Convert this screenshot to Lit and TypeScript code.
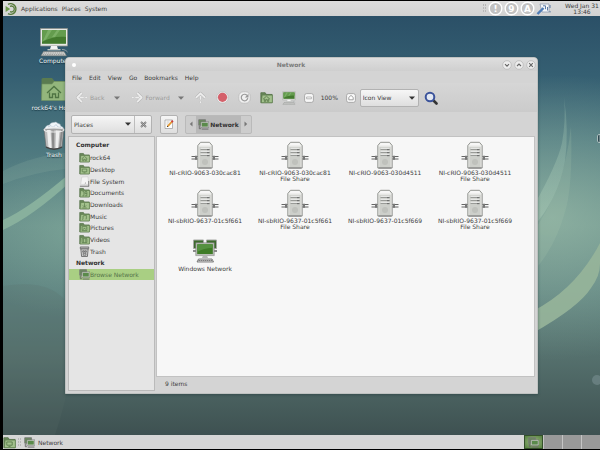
import { LitElement, html, svg, css, TemplateResult } from "lit";
import { customElement, state } from "lit/decorators.js";
import { classMap } from "lit/directives/class-map.js";

const draw = (w: number, h: number, vb: string, body: unknown): TemplateResult =>
  html`<svg class="ico" width=${w} height=${h} viewBox=${vb} aria-hidden="true">${body}</svg>`;

const glyphs: Record<string, unknown> = {
  home: svg`<path d="M2.8 7.6 6 4.8l3.2 2.8M4 7.2v2.4h1.2V8h1.6v1.6H8V7.2" />`,
  desk: svg`<path d="M3.5 5.5h5v3h-5zM5 9.6h2" />`,
  docs: svg`<path d="M3.8 5h1.6v4.6M3.6 9.6h1.8M6.6 5h2v2.2h-2zM8.6 7v2.6h-2" />`,
  down: svg`<path d="M6 4.6v4M4.2 7 6 8.8 7.8 7M3.6 9.8h4.8" />`,
  music: svg`<path d="M4.4 9V5.4l3.6-.8v4M3.6 9.2h.8M7.2 8.8H8" />`,
  pics: svg`<path d="M3.4 5h5.2v4.4H3.4zM4 8.8l1.6-2 1.4 1 1.2-1" />`,
  video: svg`<path d="M3.4 5h5.2v4.4H3.4zM4.8 5v4.4M7.4 5v4.4" />`,
};

const folder = (glyph: string, size = 11) =>
  draw(size, size, "0 0 12 12", svg`
    <path d="M.8 10.8V1.6h4l1 1.6h5.4v7.6z" fill="#69875a" stroke="#4d6b40" stroke-width=".7" />
    <path d="M1.2 10.8 2 3.8h9.4v7z" fill="#a3c18d" stroke="#587848" stroke-width=".6" />
    <g fill="none" stroke="#5b7b4c" stroke-width=".8">${glyphs[glyph]}</g>`);

const drive = () =>
  draw(11, 11, "0 0 12 12", svg`
    <path d="M3 1.2 9.8.8 10.8 11H1.6z" fill="#f4f4f4" stroke="#c3c3c3" stroke-width=".5" />
    <path d="M1.4 8.6h9.2V11H1.4z" fill="#dcdcdc" />
    <path d="M1 11.2h10M10.6 5.4v5.6M7.4 7.4l-1 1" stroke="#6d6d6d" stroke-width=".9" fill="none" />`);

const bin = () =>
  draw(11, 11, "0 0 12 12", svg`
    <path d="M2 3h8l-.8 8.4H2.8z" fill="#d5d5d5" stroke="#4d4d4d" stroke-width=".8" />
    <path d="M1.4 1h9.2v2H1.4z" fill="#b5b5b5" stroke="#555" stroke-width=".7" />
    <path d="M4 5.2h1.6v1.6H4zM6.4 5.2H8v1.6H6.4zM4.6 8h3v2h-3z" fill="none" stroke="#505050" stroke-width=".7" />`);

const screens = (size = 11) =>
  draw(size, size, "0 0 12 12", svg`
    <path d="M.8.8h7.4v6H.8z" fill="#6b8a5d" stroke="#777" stroke-width=".9" />
    <path d="M3.6 3.6h7.6v5.2H3.6z" fill="#5a8a4b" stroke="#d9d9d9" stroke-width=".9" />
    <path d="M3 3h8.8v6.4H3z" fill="none" stroke="#666" stroke-width=".5" />
    <path d="M1.4 7.4v3.2h1.8M4 11h7.4" fill="none" stroke="#666" stroke-width="1" />`);

const monitor = (size: number) =>
  draw(size, size, "0 0 30 30", svg`
    <path d="M1.5 1.5h27v17.5h-27z" fill="#e6e8e4" stroke="#8d918b" stroke-width=".8" />
    <path d="M3 3h24v13.8H3z" fill="#437a2e" />
    <path d="M3 3h24v7C18 9 10 11 3 15z" fill="#649c4e" />
    <path d="M9 3h4L7 12.5l-3 1.3zM18 3h3l-5 7h-3z" fill="#8bbd76" opacity=".6" />
    <path d="M12 19h6l1 3.2h-8z" fill="#f4f4f4" />
    <path d="M8.5 22h13v1.4h-13z" fill="#c4c7c3" />
    <path d="M4.5 24.6H25l2.5 4.2H2z" fill="#e0e2df" stroke="#6d706c" stroke-width=".6" />
    <path d="M4.5 26H25M3.6 27.4h22.6" stroke="#777" stroke-width=".7" stroke-dasharray="1.6 .6" />
    <path d="M23 22.5c3 0 4 1 5.5 2.5" stroke="#9aa3a5" stroke-width="1" fill="none" />`);

const bigFolder = () =>
  draw(30, 30, "0 0 30 30", svg`
    <path d="M2.5 25V5.5Q2.5 4 4 4h9l2.5 3h12v18z" fill="#5a7b50" />
    <path d="M2.5 26.5 3 10h10l2-2.5h13v19z" fill="#93b67c" stroke="#6f9160" stroke-width=".6" />
    <path d="m8 19 7-6.5 7 6.5M10.5 18.5v5h3V20h3v3.5h3v-5" fill="none" stroke="#4f7443" stroke-width="1.3" />`);

const bigTrash = () =>
  draw(30, 30, "0 0 30 30", svg`
    <path d="M5.5 8q1.5-4 5-4 1-3 4.5-2.5 2-1.5 4 1 3 .5 2.500 2.500 3 1 3.500 3z" fill="#f1f6fa" stroke="#a9b6c0" stroke-width=".5" />
    <path d="m9 6 3-1.500 2 2 3-3 2 2.500 3 .5" fill="none" stroke="#b9c7d3" stroke-width=".8" />
    <path d="m5 8 2 18q8 4 16 0l2-18z" fill="#bdbdbd" stroke="#666" stroke-width=".6" />
    <path d="m8 9 1.500 17.500 3 .8L11.500 9zM17 9.500l-.5 18 2.500-.5 1.500-17z" fill="#eee" />
    <path d="m12.500 9.500.8 18h2V9.500zM22 9l-2 17.500 2-.8L24 9z" fill="#8a8a8a" />
    <ellipse cx="15" cy="8.8" rx="10" ry="2.2" fill="none" stroke="#ececec" stroke-width="1.2" />
    <path d="M7 26.200q8 4 16 0" fill="none" stroke="#454545" stroke-width="1.4" />`);

const server = () =>
  draw(28, 28, "0 0 28 28", svg`
    <path d="M.5 15.500h27M.5 18h27" stroke="#666" stroke-width="1.1" />
    <path d="M4 14.800h2v4H4zM22 14.800h2v4h-2z" fill="#777" />
    <path d="M6.800 4.500 9.500 1.300h9l2.700 3.200V27H6.800z" fill="#e6e7e4" stroke="#8b8d89" stroke-width=".9" />
    <path d="m8 4.500 2-2.500h8l2 2.500z" fill="#f7f7f6" />
    <path d="M8.400 6h11.200v20H8.400z" fill="#cdcfca" />
    <path d="M9.500 8.300h9M9.500 11.300h9M9.500 14.300h9" stroke="#999b97" stroke-width="1.3" />
    <path d="M9.500 7.300h9M9.500 10.300h9M9.500 13.300h9" stroke="#f6f6f6" stroke-width=".9" />
    <path d="M16 8.700h2.500M16 11.700h2.500M16 14.700h2.500" stroke="#555" stroke-width=".7" />
    <circle cx="14" cy="21" r="3" fill="#bfc1bc" />
    <path d="M7.500 27h13" stroke="#666" stroke-width=".8" />`);

const lan = () =>
  draw(28, 28, "0 0 28 28", svg`
    <path d="M2.500 3h10v8.500h-10zM15.500 3h10v8.500h-10z" fill="#3d6b2d" stroke="#a6a8a4" stroke-width="1" />
    <path d="M2 13h5v2H2zM21 13h5v2h-5z" fill="#8b8b8b" />
    <path d="M5.500 6.500h17v11.300h-17z" fill="#3f7c27" stroke="#b9bcb6" stroke-width="1.4" />
    <path d="M4.700 5.700h18.600v12.900H4.700z" fill="none" stroke="#7b7d79" stroke-width=".5" />
    <path d="M6.500 7.300h15v3.400q-9 .5-15 4z" fill="#559140" />
    <path d="M12 18.600h4l1 2.400h-6z" fill="#b5b5b5" />
    <path d="M7.500 22H21l1.500 3H6z" fill="#dcdcdc" stroke="#555" stroke-width=".7" />
    <path d="M7.500 23.500H21" stroke="#555" stroke-width=".8" stroke-dasharray="1.4 .6" />`);

const arrow = (dir: "left" | "right" | "up") =>
  draw(13, 13, "0 0 14 14", svg`<g class=${dir} fill="none" stroke-linejoin="round">
      <path d="M7.500 2 2.500 7l5 5M5 7h4.500M11 7h2" stroke="#b2b2b2" stroke-width="3" />
      <path d="M7.500 2 2.500 7l5 5M5 7h4.500M11 7h2" stroke="#ededed" stroke-width="2" />
    </g>`);

const tri = () =>
  html`<svg class="ico" width="6" height="4" viewBox="0 0 6 4" aria-hidden="true"><path d="M0 .5h6L3 3.7z" fill="currentColor" /></svg>`;

const toolIcons: Record<string, () => TemplateResult> = {
  stop: () => draw(13, 13, "0 0 13 13", svg`
    <path d="M4 1h5l3 3v5l-3 3H4L1 9V4z" fill="#ececec" stroke="#bcbcbc" stroke-width=".6" />
    <circle cx="6.5" cy="6.3" r="4.6" fill="#d4606a" />`),
  reload: () => draw(13, 13, "0 0 13 13", svg`
    <rect x=".8" y=".8" width="11.4" height="11.4" rx="4.5" fill="#f0f0f0" stroke="#b5b5b5" stroke-width=".7" />
    <path d="M9 4.300A3.300 3.300 0 1 0 9.800 7.200" fill="none" stroke="#989898" stroke-width="1.2" />
    <path d="M10.500 2.800v3.700H6.800z" fill="#989898" />`),
  home: () => folder("home", 13),
  computer: () => monitor(14),
};

const zoomIcon = (kind: "out" | "reset") =>
  draw(10, 10, "0 0 10 10", svg`
    <rect x=".6" y=".6" width="8.8" height="8.8" rx="2" fill="#f8f8f8" stroke="#9a9a9a" stroke-width=".8" />
    ${kind === "out"
      ? svg`<path d="M2.600 4h4.800v1.800H2.600z" fill="#fff" stroke="#8f8f8f" stroke-width=".6" />`
      : svg`<path d="M5 2.400 7.200 4.400v2.400H2.800V4.400z" fill="#fff" stroke="#8a8a8a" stroke-width=".8" />`}`);

interface Place { label: string; icon: () => TemplateResult }

@customElement("app-root")
export class AppRoot extends LitElement {
  @state() private selected = "Browse Network";

  private places: Place[] = [
    { label: "rock64", icon: () => folder("home") },
    { label: "Desktop", icon: () => folder("desk") },
    { label: "File System", icon: drive },
    { label: "Documents", icon: () => folder("docs") },
    { label: "Downloads", icon: () => folder("down") },
    { label: "Music", icon: () => folder("music") },
    { label: "Pictures", icon: () => folder("pics") },
    { label: "Videos", icon: () => folder("video") },
    { label: "Trash", icon: bin },
  ];

  private network: Place[] = [{ label: "Browse Network", icon: () => screens() }];

  private hosts = [
    ["NI-cRIO-9063-030cac81"],
    ["NI-cRIO-9063-030cac81", "File Share"],
    ["NI-cRIO-9063-030d4511"],
    ["NI-cRIO-9063-030d4511", "File Share"],
    ["NI-sbRIO-9637-01c5f661"],
    ["NI-sbRIO-9637-01c5f661", "File Share"],
    ["NI-sbRIO-9637-01c5f669"],
    ["NI-sbRIO-9637-01c5f669", "File Share"],
  ];

  static styles = css`
    :host {
      display: flex;
      flex-direction: column;
      box-sizing: border-box;
      min-height: 100vh;
      padding: 1px 0 1px 3px;
      background: #000;
      color: #3c3c3c;
      font: 6px/7px "DejaVu Sans", "Noto Sans", sans-serif;
      overflow: hidden;
    }
    * { box-sizing: border-box; }
    button, select {
      margin: 0;
      padding: 0;
      border: 0;
      background: none;
      font: inherit;
      color: inherit;
      white-space: nowrap;
    }
    ul { margin: 0; padding: 0; list-style: none; }
    a { color: inherit; text-decoration: none; }
    .ico { display: block; flex: none; }
    .right { transform: rotate(180deg); transform-origin: 7px 7px; }
    .up { transform: rotate(90deg); transform-origin: 7px 7px; }

    .panel {
      display: flex;
      align-items: center;
      flex: none;
      height: 15px;
      background: linear-gradient(#dcdcdc, #d2d2d2);
    }
    .panel nav { display: flex; gap: 4px; margin-left: 4px; flex: 1; }
    .panel .ico { margin-left: 2px; }
    .tray { display: flex; align-items: center; gap: 1px; }
    .tray .ico { margin: 0; }
    .clock { width: 36px; margin-left: 13px; text-align: center; line-height: 6px; white-space: nowrap; }
    .panel.tasks { height: 14px; background: #d6d6d6; }
    .tasks .ico { margin: 0; }
    .task { display: flex; align-items: center; gap: 3px; margin-left: 2px; }
    .spaces { display: flex; gap: 1px; margin-left: auto; height: 100%; background: #c4c4c4; }
    .space { width: 18px; background: #999; }
    .space.on {
      display: grid;
      place-items: center;
      width: 19px;
      border: 1px solid #34502a;
      background: radial-gradient(#9dbd83, #56803f);
    }

    .desktop { position: relative; flex: 1; display: flex; overflow: hidden; }
    .wall { position: absolute; inset: 0; width: 100%; height: 100%; }
    .shortcuts {
      position: relative;
      display: flex;
      flex-direction: column;
      gap: 9px;
      width: 60px;
      padding: 11px 0 0;
      margin-left: 21px;
    }
    .shortcut {
      display: flex;
      flex-direction: column;
      align-items: center;
      width: 100%;
      color: #f2f5f5;
      line-height: 8px;
      text-shadow: 0 1px 1px #12303c;
    }
    .pointer { position: absolute; right: 0; top: 118px; }

    .window {
      position: absolute;
      inset: 41px 62px 41px 62px;
      display: flex;
      flex-direction: column;
      border: 1px solid #bfc2c1;
      border-radius: 4px 4px 0 0;
      background: #d4d4d4;
      box-shadow: 0 1px 3px #20383c80;
    }
    .title {
      display: flex;
      align-items: center;
      height: 13px;
      padding: 0 1px 0 6px;
      border-radius: 3px 3px 0 0;
      background: linear-gradient(#dedede, #cfcfcf);
      color: #7b7b7b;
    }
    .title h1 { flex: 1; margin: 0; padding-left: 4px; text-align: center; font: bold 6px/7px "DejaVu Sans", sans-serif; }
    .dot { width: 4px; height: 4px; border-radius: 2px; background: #fff; }
    .controls { display: flex; gap: 2px; }
    .menu { display: flex; gap: 7px; align-items: center; height: 12px; padding-left: 6px; }
    .tools {
      display: flex;
      align-items: center;
      height: 29px;
      padding-left: 9px;
      background: linear-gradient(#d6d6d6, #cbcbcb);
    }
    .tools button { display: flex; align-items: center; }
    .tools .dim { color: #9c9c9c; gap: 2px; }
    .tools .grey { color: #777; }
    .back { margin: 0 11px 0 9px; }
    .next { margin: 0 10px 0 8px; }
    .icons { display: flex; align-items: center; gap: 9px; }
    .zoom { display: flex; align-items: center; gap: 7px; margin-left: 8px; }
    .zoom output { width: 18px; }
    .pick { display: grid; align-items: center; }
    .pick > * { grid-area: 1 / 1; }
    .pick select { appearance: none; height: 100%; width: 100%; padding: 0 2px; }
    .pick .ico { justify-self: end; margin-right: 3px; pointer-events: none; color: #333; }
    .raised {
      border: 1px solid #b2b2b2;
      border-radius: 2px;
      background: linear-gradient(#f6f6f6, #dedede);
    }
    .view { width: 59px; height: 18px; margin: 0 5px 0 4px; }
    .where { display: flex; align-items: center; height: 24px; padding-left: 5px; background: #d4d4d4; }
    .places { display: flex; width: 81px; height: 19px; }
    .places .pick { flex: 1; border-right: 1px solid #bdbdbd; }
    .places button { width: 16px; display: grid; place-items: center; }
    .edit { display: grid; place-items: center; width: 18px; height: 19px; margin: 0 7px 0 8px; }
    .path {
      display: flex;
      height: 19px;
      border: 1px solid #bababa;
      border-radius: 2px;
      background: #cdcdcd;
    }
    .path button { display: flex; align-items: center; justify-content: center; width: 10px; gap: 1px; }
    .path .here { width: 45px; background: #b8b8b8; font-weight: bold; color: #333; }

    .body { display: flex; flex: 1; padding: 0 2px 2px; gap: 1px; }
    .side {
      width: 87px;
      flex: none;
      border: 1px solid #bababa;
      background: #e5e5e5;
      padding-top: 2px;
    }
    .side h2 { margin: 0; padding-left: 7px; font: bold 6px/12px "DejaVu Sans", sans-serif; color: #333; }
    .side ul { display: grid; grid-auto-rows: 1fr; }
    .side .local { height: 105px; margin-top: 1px; }
    .side a { display: flex; align-items: center; height: 100%; padding-left: 10px; }
    .side .net a { height: 11px; }
    .side a.on { background: #a9cf83; color: #56734a; }
    .pane { flex: 1; display: flex; flex-direction: column; }
    .files {
      display: grid;
      grid-template-columns: repeat(auto-fill, 90px);
      grid-auto-rows: 48px;
      flex: 1;
      align-content: start;
      padding: 4px 0 0 3px;
      border: 1px solid #c2c2c2;
      background: #f7f7f7;
    }
    .files button {
      display: flex;
      flex-direction: column;
      align-items: center;
      width: 100%;
      line-height: 6px;
    }
    .files .ico { margin-bottom: 1px; }
    .status { height: 14px; line-height: 14px; padding-left: 9px; }
  `;

  private wallpaper() {
    return html`<svg class="wall" viewBox="0 0 597 419" preserveAspectRatio="none" aria-hidden="true">
      <defs>
        <linearGradient id="sky" x1="0" y1="0" x2="0" y2="1">
          <stop offset="0" stop-color="#2b5067" />
          <stop offset=".14" stop-color="#355f72" />
          <stop offset=".3" stop-color="#4b767e" />
          <stop offset=".5" stop-color="#668d89" />
          <stop offset=".65" stop-color="#5d8280" />
          <stop offset=".82" stop-color="#546f6c" />
          <stop offset="1" stop-color="#3e5151" />
        </linearGradient>
        <radialGradient id="glow" cx=".92" cy=".48" r=".34">
          <stop offset="0" stop-color="#a3c4ae" stop-opacity=".6" />
          <stop offset="1" stop-color="#a3c4ae" stop-opacity="0" />
        </radialGradient>
        <radialGradient id="haze" cx=".12" cy=".52" r=".2">
          <stop offset="0" stop-color="#8fb8a4" stop-opacity=".45" />
          <stop offset="1" stop-color="#8fb8a4" stop-opacity="0" />
        </radialGradient>
        <linearGradient id="tail" x1="0" y1="0" x2="0" y2="1">
          <stop offset="0" stop-color="#9cc0b0" stop-opacity=".25" />
          <stop offset="1" stop-color="#a9cab5" stop-opacity=".5" />
        </linearGradient>
      </defs>
      <rect width="597" height="419" fill="url(#sky)" />
      <rect width="597" height="419" fill="url(#glow)" />
      <rect width="597" height="419" fill="url(#haze)" />
      <path d="M0 155Q30 139 70 136v16Q30 156 0 168z" fill="#8fb3a3" opacity=".2" />
      <path d="M0 204Q25 193 66 158v9Q30 200 0 214z" fill="#8db5a0" opacity=".85" />
      <path d="M0 270Q50 262 66 290q10 60-14 129H0z" fill="#5c706b" opacity=".2" />
      <path d="M561 81q5 34 1 64-8 40-32 66v-20q24-42 29-64 4-22 2-46z" fill="url(#tail)" />
      <path d="M568 110q2 60-6 86-10 36-32 60v-40q32-44 38-106z" fill="#a8c6ae" opacity=".2" />
      <path d="M597 227q-24 46-67 68v22q46-26 58-45 9-12 9-24z" fill="#97b59a" opacity=".9" />
      <circle cx="594" cy="364" r="5" fill="#72898a" opacity=".7" />
    </svg>`;
  }

  private placeRow(p: Place) {
    return html`<li>
      <a href="#" class=${classMap({ on: p.label === this.selected })}
        @click=${(e: Event) => { e.preventDefault(); this.selected = p.label; }}>${p.icon()}${p.label}</a>
    </li>`;
  }

  private control(name: string, d: string) {
    return html`<button aria-label=${name}>${draw(10, 10, "0 0 10 10", svg`
      <circle cx="5" cy="5" r="4.3" fill="#ededed" stroke="#b5b5b5" stroke-width=".7" />
      <path d=${d} fill="none" stroke="#666" stroke-width="1.1" />`)}</button>`;
  }

  private badge(mark: string) {
    return html`<svg class="ico" width="15" height="15" viewBox="0 0 15 15" aria-hidden="true">
      <circle cx="7.5" cy="7.5" r="6.3" fill="#c2c2c2" stroke="#fff" stroke-width="1.4" />
      <text x="7.5" y="10.7" text-anchor="middle" font-size="9" font-weight="bold" fill="#fff">${mark}</text>
    </svg>`;
  }

  private grip() {
    return html`<svg class="ico" width="6" height="11" viewBox="0 0 6 11" aria-hidden="true">
      <path d="M2.500 1v9M4.500 1v9" stroke="#b8b8b8" stroke-width="1" stroke-dasharray="2 1" />
    </svg>`;
  }

  render() {
    return html`
      <header class="panel">
        ${draw(12, 12, "0 0 12 12", svg`
          <g fill="none" stroke="#587b3c" stroke-width="1.3">
            <path d="M3 1.400A5.300 5.300 0 1 1 3 10.600" />
            <path d="M5 3.300a3 3 0 1 1 0 5.400" />
          </g>
          <path d="m.6 3 4.600 3-4.600 3z" fill="#6f9b4c" />`)}
        <nav><button>Applications</button><button>Places</button><button>System</button></nav>
        <div class="tray">
          ${this.grip()}${this.badge("!")}${this.badge("9")}${this.badge("A")}
          ${draw(15, 12, "0 0 15 12", svg`
            <path d="M4 1h9v8H6z" fill="#f5f7fa" stroke="#8d9bae" stroke-width=".8" />
            <path d="M1.500 11 7.500 5" stroke="#4f7cb6" stroke-width="2.4" />
            <path d="M7 2.800h2.500v3.400M11.500 4v3.500M14 2v3M14 8v1.500" stroke="#5c7ba3" stroke-width="1" fill="none" />`)}
        </div>
        <time class="clock">Wed Jan 31<br />13:46</time>
      </header>

      <main class="desktop">
        ${this.wallpaper()}
        <div class="shortcuts">
          <button class="shortcut">${monitor(30)}Computer</button>
          <button class="shortcut">${bigFolder()}rock64's Home</button>
          <button class="shortcut">${bigTrash()}Trash</button>
        </div>
        <svg class="pointer" width="3" height="9" viewBox="0 0 3 9" aria-hidden="true">
          <path d="M3 .5H1.500L.5 2v5l1 1.500H3z" fill="#2e4a52" stroke="#c7d3d2" stroke-width=".8" />
        </svg>

        <section class="window" aria-label="Network">
          <div class="title">
            <span class="dot"></span>
            <h1>Network</h1>
            <div class="controls">
              ${this.control("Minimize", "M3 4.200 5 6.200 7 4.200")}
              ${this.control("Maximize", "M3 6 5 4 7 6")}
              ${this.control("Close", "m3.200 3.200 3.600 3.600m0-3.600L3.200 6.800")}
            </div>
          </div>
          <nav class="menu">
            ${["File", "Edit", "View", "Go", "Bookmarks", "Help"].map((m) => html`<button>${m}</button>`)}
          </nav>
          <div class="tools">
            <button class="dim">${arrow("left")}Back</button>
            <button class="grey back" aria-label="Back history">${tri()}</button>
            <button class="dim">${arrow("right")}Forward</button>
            <button class="grey next" aria-label="Forward history">${tri()}</button>
            <div class="icons">
              <button aria-label="Up">${arrow("up")}</button>
              <button aria-label="Stop">${toolIcons.stop()}</button>
              <button aria-label="Reload">${toolIcons.reload()}</button>
              <button aria-label="Home">${toolIcons.home()}</button>
              <button aria-label="Computer">${toolIcons.computer()}</button>
            </div>
            <div class="zoom">
              <button aria-label="Zoom out">${zoomIcon("out")}</button>
              <output>100%</output>
              <button aria-label="Normal size">${zoomIcon("reset")}</button>
            </div>
            <div class="pick raised view">
              <select aria-label="View mode"><option>Icon View</option></select>${tri()}
            </div>
            <button aria-label="Search">${draw(14, 14, "0 0 14 14", svg`
              <path d="m9 9 3.500 3.500" stroke="#333" stroke-width="2.6" stroke-linecap="round" />
              <circle cx="6" cy="6" r="4.3" fill="#e2e8f2" stroke="#3b539b" stroke-width="2" />`)}</button>
          </div>
          <div class="where">
            <div class="places raised">
              <div class="pick"><select aria-label="Side pane"><option>Places</option></select>${tri()}</div>
              <button aria-label="Close side pane">${draw(7, 7, "0 0 7 7", svg`
                <path d="m1 1 5 5m0-5L1 6" stroke="#777" stroke-width="1.8" /><path d="m1 1 5 5m0-5L1 6" stroke="#ccc" stroke-width=".5" />`)}</button>
            </div>
            <button class="edit raised" aria-label="Edit location">${draw(10, 10, "0 0 10 10", svg`
              <path d="M1 1h7.500v8.500H1z" fill="#fdfdfd" stroke="#999" stroke-width=".7" />
              <path d="M2.500 3h3M2.500 5h2" stroke="#aaa" stroke-width=".6" />
              <path d="M3.600 7.400 8 2.600" stroke="#e39a35" stroke-width="1.8" />
              <path d="m7.600 3 1.200-1.300" stroke="#cc3b3b" stroke-width="2" />
              <path d="m3 8 .9-.9" stroke="#333" stroke-width="1" />`)}</button>
            <div class="path">
              <button aria-label="Scroll left">${draw(4, 6, "0 0 4 6", svg`<path d="M3.500.5v5L.8 3z" fill="#777" />`)}</button>
              <button class="here">${screens(11)}Network</button>
              <button aria-label="Scroll right">${draw(4, 6, "0 0 4 6", svg`<path d="M.5.5v5L3.200 3z" fill="#777" />`)}</button>
            </div>
          </div>
          <div class="body">
            <aside class="side">
              <h2>Computer</h2>
              <ul class="local">${this.places.map((p) => this.placeRow(p))}</ul>
              <h2>Network</h2>
              <ul class="net">${this.network.map((p) => this.placeRow(p))}</ul>
            </aside>
            <div class="pane">
              <ul class="files">
                ${this.hosts.map((lines) => html`<li><button>${server()}${lines.map((l) => html`<span>${l}</span>`)}</button></li>`)}
                <li><button>${lan()}<span>Windows Network</span></button></li>
              </ul>
              <div class="status">9 items</div>
            </div>
          </div>
        </section>
      </main>

      <footer class="panel tasks">
        ${folder("desk", 13)}${this.grip()}
        <button class="task">${screens(11)}Network</button>
        <div class="spaces">
          <button class="space on" aria-label="Workspace 1">${screens(11)}</button>
          <button class="space" aria-label="Workspace 2"></button>
          <button class="space" aria-label="Workspace 3"></button>
          <button class="space" aria-label="Workspace 4"></button>
        </div>
      </footer>
    `;
  }
}
